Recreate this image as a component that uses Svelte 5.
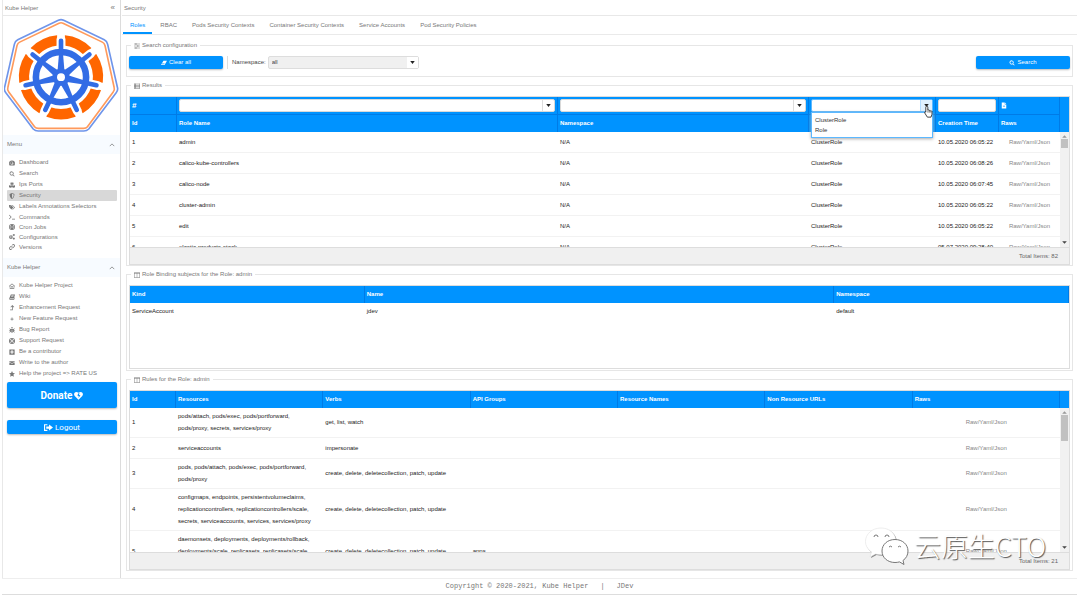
<script lang="ts">
  type MenuItem = { label: string; icon: string; selected?: boolean };

  const menu: MenuItem[] = [
    { label: "Dashboard", icon: "dashboard" },
    { label: "Search", icon: "search" },
    { label: "Ips Ports", icon: "cubes" },
    { label: "Security", icon: "shield", selected: true },
    { label: "Labels Annotations Selectors", icon: "tags" },
    { label: "Commands", icon: "terminal" },
    { label: "Cron Jobs", icon: "globe" },
    { label: "Configurations", icon: "cogs" },
    { label: "Versions", icon: "link" },
  ];

  const helperMenu: MenuItem[] = [
    { label: "Kube Helper Project", icon: "home" },
    { label: "Wiki", icon: "book" },
    { label: "Enhancement Request", icon: "levelup" },
    { label: "New Feature Request", icon: "plus" },
    { label: "Bug Report", icon: "bug" },
    { label: "Support Request", icon: "lifering" },
    { label: "Be a contributor", icon: "plussquare" },
    { label: "Write to the author", icon: "envelope" },
    { label: "Help the project => RATE US", icon: "star" },
  ];

  // all drawn on a 16x16 grid
  const icons: Record<string, string> = {
    dashboard: "M8 1.5a8 8 0 0 0-8 8c0 2 .6 3.600 1.500 5h13c.9-1.400 1.500-3 1.500-5a8 8 0 0 0-8-8zM3 11a1.200 1.200 0 1 1 0-2.400A1.200 1.200 0 0 1 3 11zm1.800-4.200a1.200 1.200 0 1 1 0-2.400 1.200 1.200 0 0 1 0 2.400zM8 3a1.200 1.200 0 1 1 0 2.400A1.200 1.200 0 0 1 8 3zm1.700 9.500H6.300c-.4-1.300.3-2.300 1.200-2.600l2.700-4.500 1 .5-2 4.500c.7.600.9 1.300.5 2.100zM13 11a1.200 1.200 0 1 1 0-2.400 1.200 1.200 0 0 1 0 2.400z",
    search: "M7 1a5.500 5.500 0 1 0 3.100 10l3.600 3.700 1.300-1.300-3.700-3.600A5.500 5.500 0 0 0 7 1zm0 2a3.500 3.500 0 1 1 0 7 3.500 3.500 0 0 1 0-7z",
    cubes: "M8 0l4 1.700v4.500L8 8 4 6.200V1.700zM8 3.400l2.600-1.200L8 1.200 5.400 2.200zM3.800 7.300l4 1.700v4.700l-4 1.800-3.800-1.800V9zm0 3.200l2.500-1.100-2.500-1-2.500 1zM12.200 7.300L16 9v4.700l-3.800 1.800-4-1.800V9zm0 3.200l2.500-1.100-2.500-1-2.500 1z",
    shield: "M8 0l6.500 2.500C14.500 9 12.500 13.500 8 16 3.500 13.500 1.500 9 1.500 2.500zM8 2v11.800c3-2 4.500-5.400 4.600-9.900z",
    tags: "M0 2.500V8l6.500 6.500 5.300-5.200L5.300 2.500zM3 6.500a1.300 1.300 0 1 1 0-2.600 1.300 1.300 0 0 1 0 2.600zM7.500 2.500l6.500 6.800-5 5 .8.700L16 9.200 9.500 2.500z",
    terminal: "M1 2l6 6-6 6-1-1.500L4.500 8 0 3.500zM8 12.500h8v2H8z",
    globe: "M8 0a8 8 0 1 0 0 16A8 8 0 0 0 8 0zM6 2.300L5 5H2.800A6 6 0 0 1 6 2.300zM10 2.300A6 6 0 0 1 13.200 5H11zM2 6.700h2.600v2.600H2zm4.500 0h3v2.600h-3zm5 0H14v2.600h-2.500zM2.800 11H5l1 2.700A6 6 0 0 1 2.800 11zM11 11h2.200a6 6 0 0 1-3.200 2.700z",
    cogs: "M4.500 3h2l.4 1.500 1.500-.6 1.200 1.400-.9 1.300 1.400.8v1.800l-1.500.5.6 1.500-1.300 1.300-1.500-.8-.6 1.500H4l-.5-1.500-1.500.6-1.300-1.300.7-1.500L0 9V7.200l1.500-.6-.6-1.400L2.200 4l1.500.7zM5 6.300a1.800 1.800 0 1 0 0 3.600 1.800 1.800 0 0 0 0-3.600zM12 0h2l.3 1.200 1.300.3v2l-1.200.5-.4 1.200h-2l-.5-1.200-1.300-.5v-2l1.300-.4zM12 9.500h2l.3 1.200 1.300.4v2l-1.200.4-.4 1.500h-2l-.5-1.500-1.300-.4v-2l1.300-.4z",
    link: "M9 1.500a4 4 0 0 1 5.700 5.600L12 9.800a4 4 0 0 1-5.700 0l1.400-1.400a2 2 0 0 0 2.900 0l2.600-2.700a2 2 0 0 0-2.800-2.800L9 4.300 7.500 3zM4 6.200a4 4 0 0 1 5.700 0L8.300 7.600a2 2 0 0 0-2.900 0l-2.600 2.700a2 2 0 0 0 2.800 2.800L7 11.700 8.500 13 7 14.500a4 4 0 0 1-5.700-5.600z",
    home: "M8 1L0 8l1 1.200 1-.8V15h12V8.400l1 .8L16 8zM8 3.200l4.500 4V13.500h-9V7.200zM6 8h4v4H6zm1.300 1.300v1.400h1.400V9.300z",
    book: "M5 1h11l-3 11H3c-1 0-1 1.300 0 1.300h10l2-6v5l-1.500 2.700H3C.5 15 0 13 .8 11zM6.500 4l-.3 1.200h6l.4-1.200zM5.800 6.500l-.3 1.200h6l.4-1.200z",
    levelup: "M9 0l5 5-1.300 1.500L10 4v10H3v-2h5V4L5.300 6.500 4 5z",
    plus: "M7 4h2v3h3v2H9v3H7V9H4V7h3z",
    bug: "M5 3.500a3 3 0 0 1 6 0zM1 3l3 2h8l3-2v2l-2 1.500V8h3v1.500h-3l-.3 1.500L15 13v2l-3.200-2.200C11 14.300 10 15 8.700 15V7H7.300v8c-1.300 0-2.300-.7-3.100-2.200L1 15v-2l2.300-2L3 9.500H0V8h3V6.500L1 5z",
    lifering: "M8 0a8 8 0 1 0 0 16A8 8 0 0 0 8 0zM6 2.300v2.200L4.500 6H2.300A6 6 0 0 1 6 2.300zM10 2.300A6 6 0 0 1 13.700 6h-2.200L10 4.500zM8 5.500a2.500 2.500 0 1 1 0 5 2.500 2.500 0 0 1 0-5zM2.300 10h2.200L6 11.500v2.200A6 6 0 0 1 2.300 10zM11.500 10h2.200a6 6 0 0 1-3.700 3.700v-2.200z",
    plussquare: "M1 1h14v14H1zM6.500 3.500v3h-3v3h3v3h3v-3h3v-3h-3v-3z",
    envelope: "M1 3h14v2L8 8.500 1 5zM1 6.500L8 10l7-3.500V13H1z",
    star: "M8 0l2.400 5.200 5.600.6-4.200 3.800L13 15.300 8 12.400l-5 2.900 1.200-5.700L0 5.800l5.600-.6z",
    sliders: "M0 2h4V.8h2.500V2H16v1.300H6.500v1.200H4V3.300H0zM0 7.300h9V6h2.500v1.300H16v1.400h-4.500V10H9V8.700H0zM0 12.700h4v-1.200h2.500v1.200H16V14H6.500v1.200H4V14H0z",
    list: "M0 1h16v14H0zM1.300 2.300v2.400h2.400V2.300zm4 0v2.400h9.400V2.300zM1.300 6.500v3h2.400v-3zm4 0v3h9.400v-3zM1.300 11v2.700h2.400V11zm4 0v2.700h9.400V11z",
    columns: "M0 1h16v14H0zM1.200 4v9.800h6.200V4zM8.600 4v9.800h6.200V4z",
    eraser: "M6.500 2H16l-6.500 11H0zM3.300 9.300L2 11.600h6.500l1.500-2.300z",
    file: "M2 0h8v5h4v11H2zM11 0l3 4h-3zM5 7v1.300h6V7zm0 3v1.300h6V10z",
    signout: "M0 2h6v2H2v8h4v2H0zM9 2.500L16 8l-7 5.500V10H4V6h5z",
    heart: "M8 15.500L1.300 8.800C-2 5 2-1 8 3.300 14-1 18 5 14.700 8.800zM7.800 3.800L6 8l2.600 1.200L7.600 12.500 11.500 8 8.800 6.800 9.800 4z",
  };

  const roleCols = ["47px", "auto", "27%", "127px", "63px", "61px"];
  const roles = [
    { id: 1, name: "admin", time: "10.05.2020 06:05:22" },
    { id: 2, name: "calico-kube-controllers", time: "10.05.2020 06:08:26" },
    { id: 3, name: "calico-node", time: "10.05.2020 06:07:45" },
    { id: 4, name: "cluster-admin", time: "10.05.2020 06:05:22" },
    { id: 5, name: "edit", time: "10.05.2020 06:05:22" },
    { id: 6, name: "elastic-products-stack", time: "05.07.2020 09:28:40" },
  ];

  const ruleCols = ["46px", "auto", "auto", "auto", "auto", "auto", "auto"];
  const crud = "create, delete, deletecollection, patch, update";
  const rules = [
    { id: 1, resources: "pods/attach, pods/exec, pods/portforward, pods/proxy, secrets, services/proxy", verbs: "get, list, watch", groups: "" },
    { id: 2, resources: "serviceaccounts", verbs: "impersonate", groups: "" },
    { id: 3, resources: "pods, pods/attach, pods/exec, pods/portforward, pods/proxy", verbs: crud, groups: "" },
    { id: 4, resources: "configmaps, endpoints, persistentvolumeclaims, replicationcontrollers, replicationcontrollers/scale, secrets, serviceaccounts, services, services/proxy", verbs: crud, groups: "" },
    { id: 5, resources: "daemonsets, deployments, deployments/rollback, deployments/scale, replicasets, replicasets/scale, statefulsets", verbs: crud, groups: "apps" },
  ];

  const tabs = ["Roles", "RBAC", "Pods Security Contexts", "Container Security Contexts", "Service Accounts", "Pod Security Policies"];

  let activeTab = $state("Roles");

  const spokes = [0, 1, 2, 3, 4, 5, 6].map((i) => (i * 360) / 7);
</script>

{#snippet icon(name: string)}
  <svg class="icon" viewBox="0 0 16 16" aria-hidden="true"><path d={icons[name]} fill="currentColor" fill-rule="evenodd" /></svg>
{/snippet}

{#snippet caret()}
  <svg class="caret" viewBox="0 0 6 4" aria-hidden="true"><path d="M0 0h6L3 4z" fill="currentColor" /></svg>
{/snippet}

{#snippet cols(widths: string[])}
  <colgroup>
    {#each widths as w}
      <col style="width: {w}" />
    {/each}
  </colgroup>
{/snippet}

{#snippet combo(label: string, open: boolean)}
  <div class="combo" class:open>
    <input type="text" aria-label={label} />
    <button type="button" aria-label="Open {label}">{@render caret()}</button>
  </div>
{/snippet}

{#snippet scrollbar()}
  <div class="scrollbar" aria-hidden="true">
    <svg viewBox="0 0 6 4"><path d="M1 3h4L3 1z" fill="#999" /></svg>
    <div class="thumb"></div>
    <svg viewBox="0 0 6 4"><path d="M1 1h4L3 3z" fill="#444" /></svg>
  </div>
{/snippet}

{#snippet navGroup(title: string, items: MenuItem[])}
  <section>
    <h2>
      {title}
      <svg class="chevron" viewBox="0 0 8 5"><path d="M1 4l3-3 3 3" fill="none" stroke="currentColor" /></svg>
    </h2>
    <ul>
      {#each items as item}
        <li class:selected={item.selected}>
          <a href="#{item.icon}">{@render icon(item.icon)}{item.label}</a>
        </li>
      {/each}
    </ul>
  </section>
{/snippet}

<div class="page">
  <div class="columns">
    <aside>
      <header class="bar">Kube Helper <span class="collapse">«</span></header>

      <svg class="logo" viewBox="12 51 347 348" role="img" aria-label="Kube Helper">
        <g fill="none" stroke-linejoin="round">
          <path d="M176 58Q184 54 192 58L315 117Q323 121 325 130L355 262Q357 270 351 277L268 387Q262 393 253 393H115Q106 393 100 387L17 277Q11 270 13 262L43 130Q45 121 53 117Z" stroke="#6f95ea" stroke-width="5" />
          <path d="M178 67Q184 64 190 67L309 124Q315 127 317 134L345 262Q347 269 342 275L264 380Q260 385 252 385H116Q108 385 104 380L26 275Q21 269 23 262L51 134Q53 127 59 124Z" stroke="#ff9a5c" stroke-width="5" />
        </g>
        <g transform="translate(184 230)">
          {#each spokes as angle}
            <path d="M-39 105A112 112 0 0 0 39 105" transform="rotate({angle})" fill="none" stroke="#ff6600" stroke-width="31" />
          {/each}
          {#each spokes as angle}
            <path d="M0-86V-114" transform="rotate({angle})" stroke="#fff" stroke-width="27" stroke-linecap="round" />
          {/each}
          <circle r="92" fill="#fff" />
          <circle r="76" fill="none" stroke="#326ce5" stroke-width="20" />
          {#each spokes as angle}
            <g transform="rotate({angle})">
              <path d="M-12 0L-6-72H6L12 0Z" fill="#326ce5" />
              <path d="M0-78V-110" stroke="#326ce5" stroke-width="14" stroke-linecap="round" />
            </g>
          {/each}
          <circle r="26" fill="#326ce5" />
          <circle r="12" fill="#fff" />
        </g>
      </svg>

      <nav>
        {@render navGroup("Menu", menu)}
        {@render navGroup("Kube Helper", helperMenu)}
      </nav>

      <button type="button" class="primary donate">Donate {@render icon("heart")}</button>
      <button type="button" class="primary logout">{@render icon("signout")} Logout</button>
    </aside>

    <main>
      <header class="bar">Security</header>

      <div class="tabs" role="tablist">
        {#each tabs as tab}
          <button type="button" role="tab" aria-selected={activeTab === tab} class:active={activeTab === tab} onclick={() => (activeTab = tab)}>{tab}</button>
        {/each}
      </div>

      <fieldset>
        <legend>{@render icon("sliders")}Search configuration</legend>
        <div class="toolbar">
          <button type="button" class="primary">{@render icon("eraser")} Clear all</button>
          <div class="namespace">
            <label for="namespace">Namespace:</label>
            <span class="select">
              <select id="namespace">
                <option>all</option>
              </select>
              <span class="select-arrow">{@render caret()}</span>
            </span>
          </div>
          <button type="button" class="primary search">{@render icon("search")} Search</button>
        </div>
      </fieldset>

      <fieldset>
        <legend>{@render icon("list")}Results</legend>
        <div class="grid">
          <div class="grid-head">
            <table>
              {@render cols(roleCols)}
              <thead>
                <tr class="filters">
                  <th class="hash">#</th>
                  <th>{@render combo("Role Name", false)}</th>
                  <th>{@render combo("Namespace", false)}</th>
                  <th class="popup-cell">
                    {@render combo("Role Type", true)}
                    <ul class="popup">
                      <li>ClusterRole</li>
                      <li>Role</li>
                    </ul>
                    <svg class="cursor" viewBox="0 0 16 22" aria-hidden="true">
                      <path d="M5 1.500c1.200 0 1.800.8 1.800 1.800V8.500c1-.6 2.200-.3 2.500.6 1-.5 2-.1 2.400.8 1.300-.4 2.500.3 2.500 1.700v4.200L12.500 21H6L1.200 13.500c-.6-1.500 1-2.500 2-1.300V3.300c0-1 .7-1.800 1.800-1.800z" fill="#fff" stroke="#222" stroke-width="1.500" />
                      <path d="M7 9v4M9.500 9.500V13M12 10.500V13" stroke="#222" />
                    </svg>
                  </th>
                  <th><input type="text" class="plain" aria-label="Creation Time" /></th>
                  <th>{@render icon("file")}</th>
                </tr>
                <tr>
                  <th>Id</th>
                  <th>Role Name</th>
                  <th>Namespace</th>
                  <th></th>
                  <th>Creation Time</th>
                  <th>Raws</th>
                </tr>
              </thead>
            </table>
          </div>
          <div class="grid-body roles">
            <div class="view">
              <table>
                {@render cols(roleCols)}
                <tbody>
                  {#each roles as role}
                    <tr>
                      <td>{role.id}</td>
                      <td>{role.name}</td>
                      <td>N/A</td>
                      <td>ClusterRole</td>
                      <td class="time">{role.time}</td>
                      <td class="raw"><a href="#raw">Raw/Yaml/Json</a></td>
                    </tr>
                  {/each}
                </tbody>
              </table>
            </div>
            {@render scrollbar()}
          </div>
          <div class="grid-foot">Total Items: 82</div>
        </div>
      </fieldset>

      <fieldset>
        <legend>{@render icon("columns")}Role Binding subjects for the Role: admin</legend>
        <div class="grid subjects">
          <table>
            {@render cols(["25%", "50%", "25%"])}
            <thead>
              <tr>
                <th>Kind</th>
                <th>Name</th>
                <th>Namespace</th>
              </tr>
            </thead>
            <tbody>
              <tr>
                <td>ServiceAccount</td>
                <td>jdev</td>
                <td>default</td>
              </tr>
            </tbody>
          </table>
        </div>
      </fieldset>

      <fieldset>
        <legend>{@render icon("columns")}Rules for the Role: admin</legend>
        <div class="grid">
          <div class="grid-head">
            <table>
              {@render cols(ruleCols)}
              <thead>
                <tr>
                  <th>Id</th>
                  <th>Resources</th>
                  <th>Verbs</th>
                  <th>API Groups</th>
                  <th>Resource Names</th>
                  <th>Non Resource URLs</th>
                  <th>Raws</th>
                </tr>
              </thead>
            </table>
          </div>
          <div class="grid-body rules">
            <div class="view">
              <table>
                {@render cols(ruleCols)}
                <tbody>
                  {#each rules as rule}
                    <tr>
                      <td>{rule.id}</td>
                      <td>{rule.resources}</td>
                      <td>{rule.verbs}</td>
                      <td>{rule.groups}</td>
                      <td></td>
                      <td></td>
                      <td class="raw"><a href="#raw">Raw/Yaml/Json</a></td>
                    </tr>
                  {/each}
                </tbody>
              </table>
            </div>
            {@render scrollbar()}
          </div>
          <div class="grid-foot">Total Items: 21</div>
        </div>
      </fieldset>
    </main>
  </div>

  <footer>
    <span>Copyright © 2020-2021, Kube Helper</span>
    <span>|</span>
    <span>JDev</span>
  </footer>

  <div class="watermark">
    <svg viewBox="0 0 46 40" aria-hidden="true">
      <g fill="#888" transform="translate(1 1)">
        <path d="M17 2C8 2 1.500 8 1.500 15.500c0 4.500 2.500 8 6 10.500L6 31l5.500-3c2 .6 4 .8 6 .8C25 28.500 32 23 32 15.500S26 2 17 2z" />
      </g>
      <path d="M17 2C8 2 1.500 8 1.500 15.500c0 4.500 2.500 8 6 10.500L6 31l5.500-3c2 .6 4 .8 6 .8C25 28.500 32 23 32 15.500S26 2 17 2z" fill="#fff" stroke="#ddd" stroke-width=".5" />
      <path d="M31 13.500c-7.500 0-13 5-13 11.500s5.500 11.500 13 11.500c1.500 0 3-.2 4.500-.6L40 38.500 39 34.500c3-2 5-5.500 5-9.500 0-6.500-5.500-11.500-13-11.500z" fill="#fff" stroke="#777" />
      <g fill="none" stroke="#777">
        <path d="M10 11a2 2 0 0 1 4 0M21 11a2 2 0 0 1 4 0M25 21a2 2 0 0 1 3 0M34 21a2 2 0 0 1 3 0" />
      </g>
    </svg>
    <span>云原生CTO</span>
  </div>
</div>

<style>
  :global(body) {
    margin: 0;
    background: #fff;
  }

  .page {
    position: relative;
    display: flex;
    flex-direction: column;
    min-height: 100vh;
    box-sizing: border-box;
    padding: 0 3px 0 2px;
    font-family: "Liberation Sans", Arial, sans-serif;
    font-size: 6px;
    line-height: 9px;
    color: #777;
  }

  .page * {
    box-sizing: border-box;
  }

  button,
  input,
  select {
    margin: 0;
    padding: 0;
    border: 0;
    font: inherit;
    color: inherit;
    background: none;
  }

  a {
    color: inherit;
    text-decoration: none;
  }

  ul {
    list-style: none;
    margin: 0;
    padding: 0;
  }

  .icon {
    width: 6px;
    height: 6px;
    flex: none;
  }

  .caret {
    width: 5px;
    height: 3px;
    color: #222;
  }

  .columns {
    flex: 1;
    display: flex;
  }

  .bar {
    display: flex;
    justify-content: space-between;
    height: 16px;
    padding: 0 5px 0 2px;
    line-height: 16px;
    border-bottom: 1px solid #e8e8e8;
  }

  .collapse {
    font-size: 8px;
  }

  /* sidebar */

  aside {
    flex: none;
    display: flex;
    flex-direction: column;
    width: 119px;
    border-left: 1px solid #e8e8e8;
    border-right: 1px solid #dcdcdc;
  }

  .logo {
    width: 115px;
    height: 115px;
    margin: 2px 1px;
  }

  h2 {
    display: flex;
    align-items: center;
    justify-content: space-between;
    height: 19px;
    margin: 0;
    padding: 0 5px 0 4px;
    background: #f7fbff;
    font-size: 6px;
    font-weight: normal;
  }

  .chevron {
    width: 6px;
    height: 4px;
  }

  nav ul {
    padding: 3px 3px 6px 4px;
  }

  nav section:last-child ul {
    padding-bottom: 3px;
  }

  nav a {
    display: flex;
    align-items: center;
    gap: 4px;
    height: 11px;
    padding-left: 2px;
    border-radius: 1px;
  }

  nav section:first-child li:nth-child(n + 6) a {
    height: 10px;
  }

  nav .selected a {
    background: #d8d8d8;
  }

  .primary {
    display: flex;
    align-items: center;
    justify-content: center;
    gap: 2px;
    width: 94px;
    height: 13px;
    border-radius: 2px;
    background: #0093ff;
    color: #fff;
    box-shadow: 0 1px 2px #bbb;
  }

  aside .primary {
    width: auto;
    margin: 0 3px 12px 4px;
    font-family: Roboto, sans-serif;
  }

  .primary.donate {
    height: 26px;
    font-size: 10px;
    font-weight: bold;
  }

  .primary.logout {
    height: 14px;
    font-size: 8px;
  }

  aside .primary .icon {
    width: 9px;
    height: 9px;
  }

  /* content */

  main {
    flex: 1;
    min-width: 0;
    margin-left: 1px;
  }

  .tabs {
    display: flex;
    gap: 1px;
    height: 19px;
    margin-bottom: 6px;
    padding-left: 1px;
    border-bottom: 1px solid #eaeaea;
  }

  .tabs button {
    padding: 0 7px;
    border-top: 2px solid transparent;
    border-bottom: 2px solid transparent;
  }

  .tabs button.active {
    color: #0093ff;
    border-bottom-color: #0093ff;
  }

  fieldset {
    min-width: 0;
    margin: 0 4px 4px;
    padding: 6px 2px 0;
    border: 1px solid #e6e6e6;
  }

  legend {
    display: flex;
    align-items: center;
    gap: 2px;
    height: 9px;
    margin-left: 2px;
    padding: 0 3px;
  }

  .toolbar {
    display: flex;
    align-items: center;
    gap: 4px;
    padding-bottom: 7px;
    color: #444;
  }

  .search {
    margin-left: auto;
  }

  .namespace {
    display: flex;
    align-items: center;
    gap: 2px;
    height: 13px;
    padding-left: 4px;
    border-left: 1px solid #ddd;
  }

  .select {
    position: relative;
    display: flex;
    width: 151px;
    height: 13px;
  }

  select {
    width: 100%;
    appearance: none;
    padding-left: 3px;
    border: 1px solid #ddd;
    border-radius: 2px;
    background: #f0f0f0;
  }

  .select-arrow {
    position: absolute;
    top: 1px;
    right: 1px;
    bottom: 1px;
    display: flex;
    align-items: center;
    justify-content: center;
    width: 11px;
    background: #fff;
    pointer-events: none;
  }

  .grid {
    border: 1px solid #ddd;
    color: #222;
  }

  .grid-head {
    padding-right: 9px;
    background: #0093ff;
  }

  table {
    width: 100%;
    table-layout: fixed;
    border-collapse: separate;
    border-spacing: 0;
  }

  th {
    height: 17px;
    padding: 0 2px;
    border-right: 1px solid #007be6;
    background: #0093ff;
    color: #fff;
    text-align: left;
    white-space: nowrap;
  }

  .filters th {
    height: 18px;
    border-bottom: 1px solid #007be6;
  }

  .filters .hash {
    font-size: 8px;
  }

  th .icon {
    display: block;
    height: 7px;
  }

  .combo {
    display: flex;
    height: 13px;
    border: 1px solid #d9d9d9;
    border-radius: 2px;
    background: #fff;
    color: #222;
    overflow: hidden;
  }

  .combo input {
    flex: 1;
    min-width: 0;
  }

  .combo button {
    display: flex;
    align-items: center;
    justify-content: center;
    width: 12px;
    border-left: 1px solid #ddd;
  }

  .combo.open {
    border-color: #5cb8ff;
  }

  .open button {
    background: #dff1ff;
    border-color: #b3dcff;
  }

  .plain {
    display: block;
    width: 100%;
    height: 13px;
    border: 1px solid #d9d9d9;
    border-radius: 2px;
    background: #fff;
  }

  .popup-cell {
    position: relative;
  }

  .popup {
    position: absolute;
    top: 15px;
    left: 2px;
    right: 2px;
    z-index: 2;
    padding: 2px 3px;
    border: 1px solid #5cb8ff;
    background: #fff;
    color: #333;
    font-weight: normal;
    line-height: 10px;
    box-shadow: 0 1px 3px #aaa;
  }

  .cursor {
    position: absolute;
    top: 8px;
    right: 2px;
    z-index: 3;
    width: 9px;
    height: 13px;
  }

  .grid-body {
    display: flex;
  }

  .roles {
    height: 115px;
  }

  .rules {
    height: 144px;
  }

  .view {
    flex: 1;
    min-width: 0;
    overflow: hidden;
  }

  td {
    height: 21px;
    padding: 2px 2px 3px;
    border-bottom: 1px solid #f2f2f2;
    line-height: 12px;
  }

  td.time {
    white-space: nowrap;
    padding-right: 0;
  }

  td.raw {
    text-align: center;
    color: #888;
  }

  .scrollbar {
    display: flex;
    flex-direction: column;
    width: 9px;
    padding: 2px 1px;
    background: #f1f1f1;
  }

  .scrollbar svg {
    width: 7px;
    height: 5px;
  }

  .thumb {
    flex: none;
    height: 9px;
    margin-bottom: auto;
    background: #c1c1c1;
  }

  .rules .thumb {
    height: 26px;
  }

  .grid-foot {
    height: 17px;
    padding-right: 11px;
    border-top: 1px solid #ddd;
    background: #f0f0f0;
    color: #666;
    line-height: 16px;
    text-align: right;
  }

  .subjects {
    min-height: 84px;
    margin-bottom: 1px;
  }

  .subjects td {
    height: 17px;
    border-bottom: 0;
  }

  footer {
    display: flex;
    justify-content: center;
    gap: 12px;
    height: 17px;
    border-top: 1px solid #eee;
    border-bottom: 1px solid #ddd;
    font-family: "Liberation Mono", "Courier New", monospace;
    font-size: 7px;
    line-height: 15px;
  }

  .watermark {
    position: absolute;
    right: 34px;
    bottom: 29px;
    display: flex;
    align-items: center;
    gap: 4px;
    color: #fff;
    font-family: "Noto Sans CJK SC", sans-serif;
    font-size: 27px;
    font-weight: 300;
    line-height: 40px;
    text-shadow: 1px 1px 1px #555;
    pointer-events: none;
  }

  .watermark svg {
    width: 46px;
    height: 40px;
  }
</style>
